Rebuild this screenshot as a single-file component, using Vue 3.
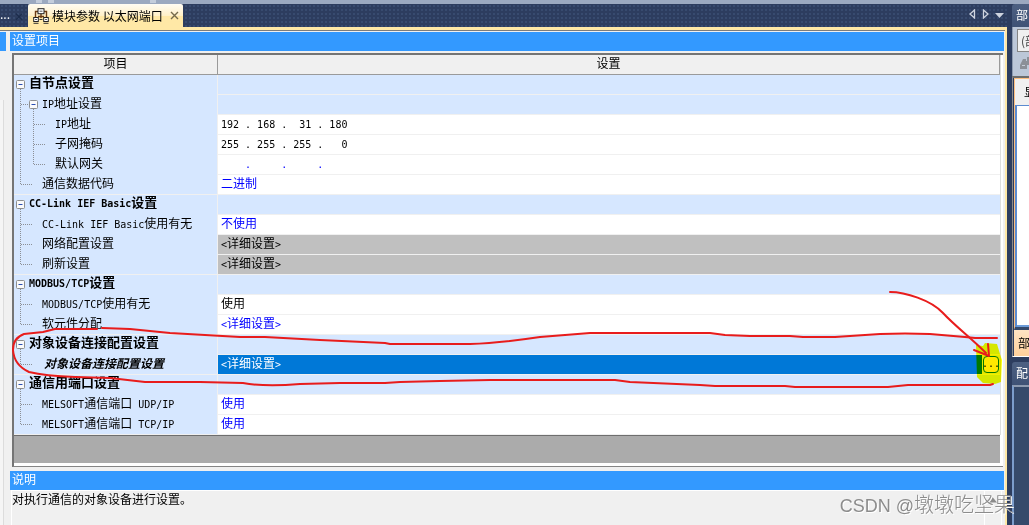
<script setup>
const groups = [
  {
    id: 'node',
    rows: [
      { name: '自节点设置', kind: 'group' },
      { name: 'IP地址设置', kind: 'branch' },
      { name: 'IP地址', level: 2, value: '192 . 168 .  31 . 180' },
      { name: '子网掩码', level: 2, value: '255 . 255 . 255 .   0' },
      { name: '默认网关', level: 2, last: true, value: '    .     .     .', tone: 'blue' },
      { name: '通信数据代码', level: 1, last: true, value: '二进制', tone: 'blue' },
    ],
  },
  {
    id: 'cclink',
    rows: [
      { name: 'CC-Link IEF Basic设置', kind: 'group' },
      { name: 'CC-Link IEF Basic使用有无', level: 1, value: '不使用', tone: 'blue' },
      { name: '网络配置设置', level: 1, value: '<详细设置>', tone: 'disabled' },
      { name: '刷新设置', level: 1, last: true, value: '<详细设置>', tone: 'disabled' },
    ],
  },
  {
    id: 'modbus',
    rows: [
      { name: 'MODBUS/TCP设置', kind: 'group' },
      { name: 'MODBUS/TCP使用有无', level: 1, value: '使用' },
      { name: '软元件分配', level: 1, last: true, value: '<详细设置>', tone: 'blue' },
    ],
  },
  {
    id: 'device',
    rows: [
      { name: '对象设备连接配置设置', kind: 'group' },
      { name: '对象设备连接配置设置', level: 1, last: true, value: '<详细设置>', tone: 'selected' },
    ],
  },
  {
    id: 'port',
    rows: [
      { name: '通信用端口设置', kind: 'group' },
      { name: 'MELSOFT通信端口 UDP/IP', level: 1, value: '使用', tone: 'blue' },
      { name: 'MELSOFT通信端口 TCP/IP', level: 1, last: true, value: '使用', tone: 'blue' },
    ],
  },
]

// Splits a label into Latin and Chinese runs so each gets its own face.
function runs(text) {
  return (text.match(/[\x20-\x7e]+|[^\x20-\x7e]+/g) || []).map((t) => ({
    t,
    latin: /^[\x20-\x7e]/.test(t),
  }))
}

function treeWidth(row) {
  if (row.kind === 'group') return 15
  return row.level === 2 ? 41 : 28
}

function treePath(row) {
  if (row.kind === 'group') return 'M6.5 14V20'
  if (row.kind === 'branch') return 'M6.5 0V20M7 9.5H15M19.5 14V20'
  const end = row.last ? 10 : 20
  return row.level === 2
    ? `M6.5 0V20M19.5 0V${end}M20 9.5H32`
    : `M6.5 0V${end}M7 9.5H19`
}

function boxX(row) {
  return row.kind === 'branch' ? 15.5 : 2.5
}
</script>

<template>
  <div class="app">
    <div class="top-strip"><i></i><i></i><i></i></div>
    <div class="workspace">
      <section class="document">
        <header class="tabs">
          <span class="prev-tab">...</span>
          <span class="prev-close">✕</span>
          <div class="tab">
            <svg class="tab-icon" width="16" height="16" viewBox="0 0 16 16" fill="none">
              <path d="M5 3.5H2.5V10M11 3.5h2.5V10M8 6v4M5 8.5h6" stroke="#6b3a12" stroke-width="1.4" />
              <rect x="5" y=".7" width="6" height="5" fill="#fff" stroke="#222" />
              <rect x=".7" y="9.5" width="4.6" height="4" fill="#fff" stroke="#222" />
              <rect x="10.7" y="9.5" width="4.6" height="4" fill="#fff" stroke="#222" />
              <path d="M6.5 3.2h3M2 11.5h2M12 11.5h2" stroke="#555" />
              <path d="M.5 15.3h5M10.5 15.3h5M6.5 11.5h3" stroke="#333" />
            </svg>
            <span>模块参数 以太网端口</span>
            <button class="close" aria-label="关闭">
              <svg width="9" height="9" viewBox="0 0 9 9"><path d="M1 1l7 7M8 1L1 8" stroke="#756a4b" stroke-width="1.4" /></svg>
            </button>
          </div>
          <nav class="tab-nav">
            <button aria-label="向左"><svg width="7" height="10" viewBox="0 0 7 10"><path d="M5.5 1v8L1 5z" fill="none" stroke="#ced4df" stroke-width="1.3" /></svg></button>
            <button aria-label="向右"><svg width="7" height="10" viewBox="0 0 7 10"><path d="M1.5 1v8L6 5z" fill="none" stroke="#ced4df" stroke-width="1.3" /></svg></button>
            <button aria-label="列表"><svg width="9" height="10" viewBox="0 0 9 10"><path d="M0 4h9L4.500 9z" fill="#ced4df" /></svg></button>
          </nav>
        </header>

        <div class="body">
          <aside class="left-pane"><div class="left-title"></div><div class="left-fill"></div></aside>
          <main class="main">
            <h2 class="bar">设置项目</h2>
            <div class="grid-frame">
              <table>
                <colgroup><col class="name-col" /><col /></colgroup>
                <thead>
                  <tr><th scope="col">项目</th><th scope="col">设置</th></tr>
                </thead>
                <tbody v-for="g in groups" :key="g.id">
                  <tr v-for="(row, i) in g.rows" :key="i" :class="[row.kind, row.tone]">
                    <th scope="row">
                      <div class="name">
                        <svg :width="treeWidth(row)" height="20" class="tree">
                          <path :d="treePath(row)" fill="none" stroke="#8b8f96" stroke-dasharray="1 1" />
                          <g v-if="row.kind">
                            <rect :x="boxX(row)" y="5.500" width="8" height="8" rx="1" fill="#fafafa" stroke="#8e8f8f" />
                            <path :d="`M${boxX(row) + 2} 9.500h4`" stroke="#2a4fb4" />
                          </g>
                        </svg>
                        <span class="label"><span v-for="(r, k) in runs(row.name)" :key="k" :class="{ latin: r.latin }">{{ r.t }}</span></span>
                      </div>
                    </th>
                    <td>
                      <div v-if="row.value" class="value">
                        <span class="label"><span v-for="(r, k) in runs(row.value)" :key="k" :class="{ latin: r.latin }">{{ r.t }}</span></span>
                        <span v-if="row.tone === 'selected'" class="more-slot"><button class="more" aria-label="详细设置">...</button></span>
                      </div>
                    </td>
                  </tr>
                </tbody>
              </table>
              <div class="grid-rest"></div>
            </div>
            <h2 class="bar note-title">说明</h2>
            <div class="note">
              <p>对执行通信的对象设备进行设置。</p>
              <div class="scroll"><svg width="9" height="6" viewBox="0 0 9 6"><path d="M0 5.500L4.500 0 9 5.500z" fill="#8b8b8b" /></svg></div>
            </div>
          </main>
        </div>
      </section>

      <aside class="dock">
        <section class="parts">
          <h3>部</h3>
          <div class="tools">
            <div class="search">(部</div>
            <svg width="16" height="14" viewBox="0 0 16 14" fill="#8c9098">
              <path d="M3 3h3v2h1V1h3v3h2l3 6v3h-5V9H7v4H0v-4z" />
              <path d="M2 9.500h3M11 9h2" stroke="#c6cdd9" />
            </svg>
          </div>
          <div class="list">
            <div class="list-head">显</div>
            <div class="list-body"></div>
            <div class="list-tab">部</div>
          </div>
        </section>
        <section class="config">
          <h3>配</h3>
          <div class="config-body"></div>
        </section>
      </aside>
    </div>

    <svg class="overlay marker" viewBox="0 0 1029 525">
      <path d="M985 343L997 344 1000 354 1002 360 1001 382 995 384 983 383 977 377 976 345 983 346z" fill="#ff0" />
    </svg>
    <svg class="overlay" viewBox="0 0 1029 525" fill="none" stroke="#e81c1c" stroke-width="2" stroke-linecap="round" stroke-linejoin="round">
      <path d="M97 329H55L43 332 24 334Q13 338 13 350 14 365 29 372 45 376 75 377L110 378 145 382 200 382 243 383Q265 387 300 384L340 383 385 383 400 382 440 381 490 380H615L630 382 700 385 715 386H785L795 387H888L908 385H990L993 384" />
      <path d="M102 328L130 329 170 333 240 337 265 337 320 340 385 343 390 344H470Q500 343 540 337L590 333H710L725 335 750 336H790L803 337H835L880 334Q905 333 930 334L965 337 975 338H997" />
      <path d="M890 292C905 292 931 300 943 313C955 326 970 337 986 353M974 350L989 356 988 344" />
    </svg>
    <div class="watermark"><span>CSDN @</span>墩墩吃坚果</div>
  </div>
</template>

<style>
html,
body {
  background: #2d3d5f;
  overflow: hidden;
}
</style>

<style scoped>
.app {
  position: relative;
  display: flex;
  flex-direction: column;
  height: 100vh;
  overflow: hidden;
  font: 12px/16px "Noto Sans CJK SC", sans-serif;
  color: #000;
  background: #2d3d5f;
}
h2, h3, p { margin: 0; font-size: 12px; font-weight: 400; }
button { padding: 0; border: 0; background: none; display: flex; }
.top-strip { flex: 0 0 4px; display: flex; padding-left: 36px; gap: 6px; background: #9ba9c0; }
.top-strip i { width: 6px; height: 3px; background: #c3cddc; }
.top-strip i:last-child { margin-left: 90px; }
.workspace { flex: 1; display: flex; min-height: 0; }
.document { flex: 1; min-width: 0; display: flex; flex-direction: column; margin-right: 5px; }
.tabs {
  flex: 0 0 23px;
  display: flex;
  align-items: stretch;
  background-color: #2d3d5f;
  background-image: radial-gradient(#384b6f 1px, transparent 1px);
  background-size: 4px 4px;
}
.prev-tab { width: 14px; color: #fff; line-height: 20px; }
.prev-close { width: 14px; color: #1c2c4b; line-height: 23px; }
.tab {
  display: flex;
  align-items: center;
  gap: 3px;
  padding: 0 4px 0 5px;
  background: linear-gradient(#fffcf3, #fff0c8 50%, #ffe8a6 52%);
  border-radius: 2px 2px 0 0;
  line-height: 14px;
  white-space: nowrap;
}
.close { margin-left: 4px; }
.tab-nav { margin-left: auto; display: flex; align-items: center; gap: 6px; padding: 0 3px 4px 0; }
.body {
  flex: 1;
  display: flex;
  min-height: 0;
  background: #f0f0f0;
  border-top: 3px solid #ffe8a6;
  border-right: 2px solid #ffe8a6;
  box-shadow: inset 0 1px #7d7d7d;
  padding-top: 2px;
}
.left-pane { width: 6px; margin-right: 4px; display: flex; flex-direction: column; }
.left-title { height: 19px; background: #39f; }
.left-fill { flex: 1; margin: 49px 2px 0 0; border-right: 1px solid #dcdcdc; background: #f5f5f5; }
.main { flex: 1; min-width: 0; display: flex; flex-direction: column; margin-right: 1px; }
.bar { flex: 0 0 19px; padding-left: 2px; background: #39f; color: #fff; line-height: 16px; }
.grid-frame {
  flex: 0 0 auto;
  margin: 2px 1px 0 2px;
  border-top: 2px solid #757575;
  border-left: 2px solid #757575;
  border-bottom: 1px solid #858585;
  padding: 0 3px 3px 0;
  background: #fff;
}
table { width: 100%; table-layout: fixed; border-collapse: separate; border-spacing: 0; box-shadow: 1px 0 #dedede; }
.name-col { width: 204px; }
th, td { box-sizing: border-box; height: 20px; padding: 0; text-align: left; font-weight: 400; }
thead th {
  background: #f0f0f0;
  border-right: 1px solid #9a9a9a;
  border-bottom: 1px solid #9a9a9a;
  text-align: center;
  line-height: 16px;
  vertical-align: top;
}
tbody th { background: #d6e7ff; border-right: 1px solid #f0f0f0; }
tbody td { background: #fff; border-bottom: 1px solid #f0f0f0; }
tbody tr:last-child th { box-shadow: inset 0 -1px #f0f0f0; }
.group td, .branch td { background: #d6e7ff; }
.name { display: flex; height: 20px; }
.tree { flex: none; }
.label { white-space: pre; line-height: 16px; }
.group .name .label { font-weight: 700; font-size: 13px; line-height: 14px; }
.latin { font-family: "DejaVu Sans Mono", monospace; font-size: 10px; }
.value { display: flex; justify-content: space-between; height: 19px; padding-left: 3px; }
.blue .value { color: #00f; }
.disabled td { background: #c0c0c0; }
.selected td { background: #0078d7; }
.selected .value { color: #fff; }
.selected .name .label { font-weight: 700; font-style: italic; padding-left: 2px; }
.more-slot { display: flex; align-items: center; padding: 0 1px; background: #e8e8ff; }
.more {
  box-sizing: border-box;
  width: 16px;
  height: 17px;
  justify-content: center;
  border: 1px solid #0078d7;
  border-radius: 4px;
  background: #ffe8e8;
  color: #000;
  font: 10px/14px "DejaVu Sans Mono", monospace;
}
.grid-rest { height: 27px; border-top: 1px solid #6e6e6e; background: #ababab; }
.note-title { margin-top: 4px; }
.note { flex: 1; display: flex; justify-content: space-between; margin-left: 1px; border-top: 1px solid #fff; border-left: 1px solid #fff; }
.note p { line-height: 16px; }
.scroll { width: 13px; margin-right: 2px; padding: 6px 0 0 3px; border-left: 1px solid #fff; border-right: 1px solid #fff; }
.scroll svg { display: block; }
.dock { flex: 0 0 17px; display: flex; flex-direction: column; gap: 5px; overflow: hidden; white-space: nowrap; }
.dock h3 { height: 23px; padding-left: 4px; color: #fff; line-height: 22px; background: linear-gradient(#4d6082, #3f5275); border-radius: 3px 0 0 0; }
.parts { flex: 0 0 353px; display: flex; flex-direction: column; }
.tools { flex: 0 0 49px; border-left: 1px solid #8e9bb0; background: #bcc7d8; padding: 2px 0 0 4px; box-sizing: border-box; }
.search { width: 30px; height: 21px; border: 1px solid #858585; background: #f0f0f0; line-height: 21px; padding-left: 3px; color: #444; }
.tools svg { display: block; margin: 4px 0 0 3px; }
.list { flex: 1; display: flex; flex-direction: column; border-top: 2px solid #6d6d6d; border-left: 1px solid #8b8b8b; border-bottom: 1px solid #fff; }
.list-head { flex: 0 0 23px; border: 1px solid #ffbf80; border-width: 1px 0 0 1px; margin-left: 1px; padding-left: 9px; line-height: 26px; background: #f0f0f0; }
.list-body { flex: 1; border-left: 1px solid #ffbf80; border-bottom: 3px solid #35496a; margin-left: 1px; background: #fff; box-shadow: inset 2px 1px #5b8bd0, inset 0 -2px #6c9bd8; }
.list-tab { flex: 0 0 25px; margin-left: 1px; padding-left: 4px; line-height: 26px; background: linear-gradient(#ffe4c4, #ffd09b); }
.config { flex: 1; display: flex; flex-direction: column; }
.config-body { flex: 1; border-top: 2px solid #8e9bb0; border-left: 2px solid #7c9dcc; background: #364a6b; }
.overlay { position: absolute; top: 0; left: 0; width: 100%; pointer-events: none; }
.marker { mix-blend-mode: multiply; }
.watermark {
  position: absolute;
  right: 15px;
  bottom: 5px;
  font: 300 20px/28px "Liberation Sans", "Noto Sans CJK SC", sans-serif;
  color: #8c8c8c;
  text-shadow: 1px 1px #fff;
  white-space: nowrap;
}
.watermark span { font-size: 18px; }
</style>
